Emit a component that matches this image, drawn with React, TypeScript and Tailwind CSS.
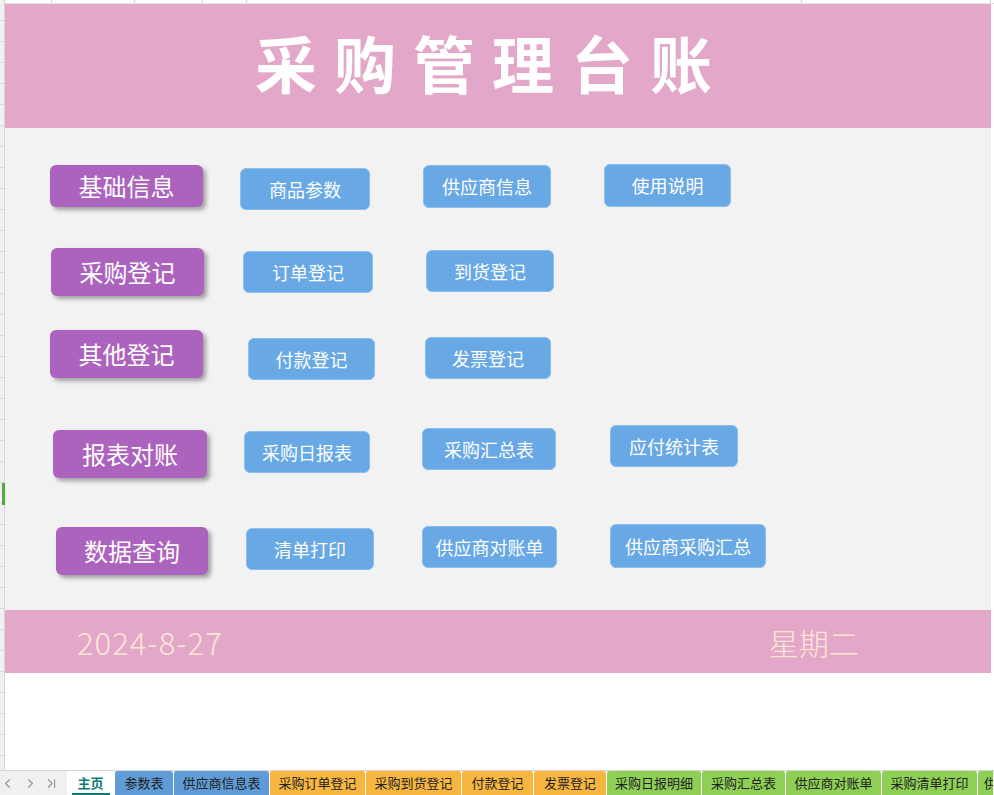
import React from 'react';
import { ChevronLeft, ChevronRight, ChevronLast } from 'lucide-react';

type Btn = { label: string; cls: string };

const CJK = "font-['Noto_Sans_CJK_SC','Noto_Sans',sans-serif]";

// purple section labels
const purple = 'flex items-center justify-center rounded-[6px] bg-[#ac63bd] text-white text-[24px] shadow-[3px_3px_4px_rgba(60,60,60,0.45)] shrink-0';
// blue link buttons
const blue = 'flex items-center justify-center rounded-[6px] bg-[#67a8e5] border border-[#8dbdec] text-white text-[18px] shrink-0';

const rows: { h: string; items: Btn[] }[] = [
  {
    h: 'h-[84px]',
    items: [
      { label: '基础信息', cls: `${purple} ml-[45px] mt-[1px] w-[153px] h-[42px]` },
      { label: '商品参数', cls: `${blue} ml-[37px] mt-[4px] w-[130px] h-[42px]` },
      { label: '供应商信息', cls: `${blue} ml-[53px] mt-[1px] w-[128px] h-[43px]` },
      { label: '使用说明', cls: `${blue} ml-[53px] mt-0 w-[127px] h-[43px]` },
    ],
  },
  {
    h: 'h-[82px]',
    items: [
      { label: '采购登记', cls: `${purple} ml-[46px] mt-0 w-[153px] h-[48px]` },
      { label: '订单登记', cls: `${blue} ml-[39px] mt-[3px] w-[130px] h-[42px]` },
      { label: '到货登记', cls: `${blue} ml-[53px] mt-[2px] w-[128px] h-[42px]` },
    ],
  },
  {
    h: 'h-[95px]',
    items: [
      { label: '其他登记', cls: `${purple} ml-[45px] mt-0 w-[153px] h-[48px]` },
      { label: '付款登记', cls: `${blue} ml-[45px] mt-[8px] w-[127px] h-[42px]` },
      { label: '发票登记', cls: `${blue} ml-[50px] mt-[7px] w-[126px] h-[42px]` },
    ],
  },
  {
    h: 'h-[99px]',
    items: [
      { label: '报表对账', cls: `${purple} ml-[48px] mt-[5px] w-[154px] h-[48px]` },
      { label: '采购日报表', cls: `${blue} ml-[37px] mt-[6px] w-[126px] h-[42px]` },
      { label: '采购汇总表', cls: `${blue} ml-[52px] mt-[3px] w-[134px] h-[42px]` },
      { label: '应付统计表', cls: `${blue} ml-[54px] mt-0 w-[128px] h-[42px]` },
    ],
  },
  {
    h: 'h-[86px]',
    items: [
      { label: '数据查询', cls: `${purple} ml-[51px] mt-[3px] w-[152px] h-[48px]` },
      { label: '清单打印', cls: `${blue} ml-[38px] mt-[4px] w-[128px] h-[42px]` },
      { label: '供应商对账单', cls: `${blue} ml-[48px] mt-[2px] w-[135px] h-[42px]` },
      { label: '供应商采购汇总', cls: `${blue} ml-[53px] mt-0 w-[156px] h-[44px]` },
    ],
  },
];

const tabs: { label: string; cls: string }[] = [
  { label: '参数表', cls: 'w-[59px] bg-[#5f9bd6]' },
  { label: '供应商信息表', cls: 'w-[96px] bg-[#5f9bd6]' },
  { label: '采购订单登记', cls: 'w-[96px] bg-[#f6b63f]' },
  { label: '采购到货登记', cls: 'w-[96px] bg-[#f6b63f]' },
  { label: '付款登记', cls: 'w-[72px] bg-[#f6b63f]' },
  { label: '发票登记', cls: 'w-[73px] bg-[#f6b63f]' },
  { label: '采购日报明细', cls: 'w-[95px] bg-[#8fcf55]' },
  { label: '采购汇总表', cls: 'w-[84px] bg-[#8fcf55]' },
  { label: '供应商对账单', cls: 'w-[96px] bg-[#8fcf55]' },
  { label: '采购清单打印', cls: 'w-[96px] bg-[#8fcf55]' },
];

export default function App() {
  return (
    <div className={`w-[994px] h-[795px] overflow-hidden bg-white flex flex-col ${CJK}`}>
      <div className="flex flex-1 min-h-0">
        {/* row header column */}
        <div className="w-[5px] shrink-0 bg-[#f0f0f0] border-r border-[#d6d6d6] bg-[repeating-linear-gradient(to_bottom,#f0f0f0_0px,#f0f0f0_20px,#d9d9d9_20px,#d9d9d9_21px)] flex flex-col">
          <div className="h-[483px]" />
          <div className="h-[22px] w-[3px] ml-[2px] bg-[#4caf3a]" />
        </div>

        <div className="flex-1 flex flex-col">
          {/* top grid strip */}
          <div className="h-[4px] flex bg-white border-b border-[#e2e2e2]">
            <div className="w-[47px] border-r border-[#d6d6d6]" />
            <div className="w-[83px] border-r border-[#d6d6d6]" />
            <div className="w-[68px] border-r border-[#d6d6d6]" />
            <div className="w-[44px] border-r border-[#d6d6d6]" />
            <div className="w-[555px] border-r border-[#d6d6d6]" />
            <div className="w-[189px] border-r border-[#d6d6d6]" />
          </div>

          <div className="w-[986px] flex flex-col">
            {/* title */}
            <div className="h-[124px] bg-[#e2a7c9] flex items-center justify-center pr-[12px] pb-[8px]">
              <h1 className="text-white text-[62px] font-bold tracking-[17px] leading-none">采购管理台账</h1>
            </div>

            {/* navigation area */}
            <div className="h-[482px] bg-[#f2f2f2] pt-[36px] flex flex-col">
              {rows.map((row, i) => (
                <div key={i} className={`${row.h} flex items-start`}>
                  {row.items.map((b) => (
                    <div key={b.label} className={b.cls}>
                      {b.label}
                    </div>
                  ))}
                </div>
              ))}
            </div>

            {/* date bar */}
            <div className="h-[63px] bg-[#e2a7c9] flex items-center text-[#fde6d3] font-light">
              <span className="ml-[72px] text-[31px] tracking-[1px] leading-none">2024-8-27</span>
              <span className="ml-[546px] text-[30px] leading-none">星期二</span>
            </div>
          </div>

          <div className="flex-1 bg-white" />
        </div>
      </div>

      {/* sheet tabs */}
      <div className="h-[25px] shrink-0 flex overflow-hidden bg-[#f0f0f0] border-t border-[#d4d4d4] text-[13px] text-[#222]">
        <div className="w-[67px] shrink-0 flex items-center text-[#9a9a9a]">
          <ChevronLeft size={15} strokeWidth={2} className="ml-[0px]" />
          <ChevronRight size={15} strokeWidth={2} className="ml-[8px]" />
          <ChevronLast size={15} strokeWidth={2} className="ml-[6px]" />
        </div>
        <div className="w-[47px] shrink-0 bg-white flex flex-col items-center justify-center relative">
          <span className="text-[#0e7a72] font-bold text-[13px]">主页</span>
          <div className="absolute bottom-0 left-[5px] right-[4px] h-[2px] bg-[#0e7a72]" />
        </div>
        {tabs.map((t) => (
          <div key={t.label} className={`${t.cls} shrink-0 flex items-center justify-center border-l border-white rounded-t-[3px]`}>
            <span className="whitespace-nowrap">{t.label}</span>
          </div>
        ))}
        <div className="w-[16px] shrink-0 bg-[#8fcf55] border-l border-white rounded-tl-[3px] flex items-center pl-[6px] overflow-hidden">
          <span className="whitespace-nowrap">供</span>
        </div>
      </div>
    </div>
  );
}
